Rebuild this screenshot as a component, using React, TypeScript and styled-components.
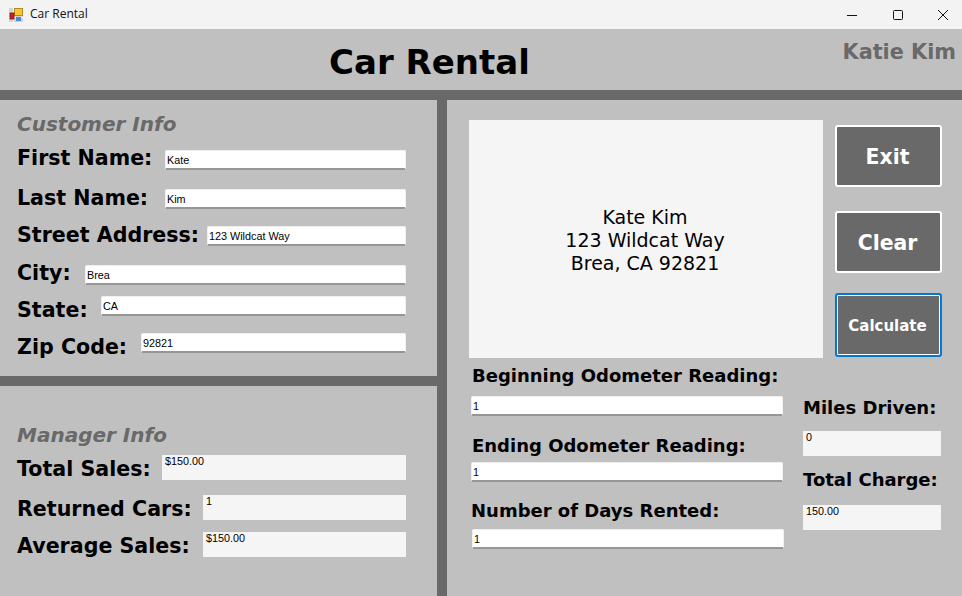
import React from "react";
import styled, { createGlobalStyle } from "styled-components";

const GlobalStyle = createGlobalStyle`
  html, body {
    margin: 0;
    padding: 0;
    background: #c0c0c0;
    overflow: hidden;
  }
  * {
    box-sizing: border-box;
  }
`;

const Window = styled.div`
  width: 962px;
  height: 596px;
  display: flex;
  flex-direction: column;
  background: #c0c0c0;
  font-family: "DejaVu Sans", Verdana, sans-serif;
  color: #000;
`;

const TitleBar = styled.div`
  height: 29px;
  flex: none;
  display: flex;
  align-items: center;
  background: #f3f3f3;
  padding-left: 9px;
`;

const WindowTitle = styled.span`
  margin: 0 0 2px 7px;
  font: 12px "Open Sans", "Noto Sans", sans-serif;
  color: #111;
`;

const WindowButtons = styled.div`
  margin-left: auto;
  display: flex;
  gap: 25.5px;
  padding-right: 9px;
`;

const WindowButton = styled.div`
  width: 20px;
  height: 27px;
  display: flex;
  align-items: center;
  justify-content: center;
`;

const Header = styled.header`
  height: 71px;
  flex: none;
  display: flex;
  border-bottom: 10px solid #696969;
  padding: 10px 6px 0 329px;
  justify-content: space-between;
`;

const Title = styled.h1`
  margin: 0;
  font-size: 34px;
  line-height: 46px;
  font-weight: 700;
`;

const Author = styled.div`
  margin-top: 1px;
  font-size: 20.8px;
  line-height: 24px;
  font-weight: 700;
  color: #696969;
`;

const Body = styled.main`
  flex: 1;
  display: flex;
  min-height: 0;
`;

const LeftColumn = styled.div`
  width: 447px;
  flex: none;
  display: flex;
  flex-direction: column;
  border-right: 10px solid #696969;
`;

const Section = styled.section<{ $height: number; $top: number; $divider?: boolean }>`
  height: ${(p) => p.$height}px;
  padding: ${(p) => p.$top}px 31px 0 17px;
  flex: none;
  border-bottom: ${(p) => (p.$divider ? "10px solid #696969" : "none")};
`;

const SectionTitle = styled.h2<{ $height: number }>`
  margin: 0;
  height: ${(p) => p.$height}px;
  font-size: 20px;
  line-height: 24px;
  font-weight: 700;
  font-style: italic;
  color: #696969;
`;

const Row = styled.div<{ $height: number; $gap: number }>`
  height: ${(p) => p.$height}px;
  margin-bottom: ${(p) => p.$gap}px;
  display: flex;
  align-items: flex-start;
  justify-content: space-between;
`;

const FieldLabel = styled.label<{ $shift: number }>`
  margin-top: ${(p) => p.$shift}px;
  font-size: 20.6px;
  line-height: 24px;
  font-weight: 700;
  white-space: nowrap;
`;

const TextBox = styled.input<{ $width: number; $gap?: number; $left?: number }>`
  display: block;
  width: ${(p) => p.$width}px;
  height: 20px;
  margin: 0 0 ${(p) => p.$gap ?? 0}px ${(p) => p.$left ?? 0}px;
  padding: 1px 1px 0;
  border: 1px solid #f0f0f0;
  border-bottom: 2px solid #969696;
  border-radius: 2px;
  outline: none;
  background: #fff;
  font: 10.8px "Liberation Sans", Arial, sans-serif;
  color: #000;
`;

const OutputBox = styled.div<{ $width: number }>`
  width: ${(p) => p.$width}px;
  height: 25px;
  padding: 0 3px;
  background: #f5f5f5;
  font: 10.8px/12px "Liberation Sans", Arial, sans-serif;
  color: #000;
`;

const RightColumn = styled.div`
  flex: 1;
  display: flex;
  flex-direction: column;
  padding: 20px 20px 0 22px;
`;

const TopRow = styled.div`
  height: 238px;
  flex: none;
  display: flex;
  justify-content: space-between;
`;

const AddressBox = styled.div`
  width: 354px;
  display: flex;
  align-items: center;
  justify-content: center;
  padding: 3px 2px 0 0;
  background: #f5f5f5;
  text-align: center;
  font-size: 19px;
  line-height: 23px;
  white-space: pre-line;
`;

const ButtonColumn = styled.div`
  width: 107px;
  display: flex;
  flex-direction: column;
  padding-top: 5px;
`;

const ActionButton = styled.button<{ $height: number; $gap: number; $small?: boolean; $focused?: boolean }>`
  height: ${(p) => p.$height}px;
  margin: 0 0 ${(p) => p.$gap}px;
  padding: ${(p) => (p.$small ? "2px 2px 0 0" : "2px 2px 0 0")};
  border: 2px solid ${(p) => (p.$focused ? "#0078d7" : "#fff")};
  border-radius: 3px;
  box-shadow: ${(p) => (p.$focused ? "inset 0 0 0 1px #fff" : "none")};
  background: #696969;
  color: #fff;
  font-family: "DejaVu Sans", Verdana, sans-serif;
  font-weight: 700;
  font-size: ${(p) => (p.$small ? 15 : 20.4)}px;
`;

const BottomRow = styled.div`
  flex: 1;
  display: flex;
  justify-content: space-between;
  padding-right: 1px;
`;

const OdometerColumn = styled.div`
  width: 314px;
  padding: 6px 0 0 2px;
`;

const ReadingLabel = styled.div<{ $height: number; $indent?: number }>`
  height: ${(p) => p.$height}px;
  padding-left: ${(p) => p.$indent ?? 1}px;
  font-size: 18px;
  line-height: 24px;
  font-weight: 700;
  white-space: nowrap;
`;

const ResultColumn = styled.div`
  width: 138px;
  padding-top: 38px;
`;

const ResultLabel = styled.div<{ $height: number; $top?: number }>`
  height: ${(p) => p.$height}px;
  margin-top: ${(p) => p.$top ?? 0}px;
  font-size: 18px;
  line-height: 24px;
  font-weight: 700;
  white-space: nowrap;
`;

const AppIcon = () => (
  <svg width="14" height="14" viewBox="0 0 14 14">
    <rect x="0" y="0" width="14" height="14" fill="#d4d4d4" />
    <path d="M4.5 0v14M0 9.5h14" stroke="#f4f4f4" strokeWidth="1" />
    <rect x="5.5" y="0.5" width="8" height="7" fill="#f8c62f" stroke="#b58a1e" strokeWidth="1" />
    <rect x="1" y="5" width="4" height="6" fill="#d0201a" stroke="#7d1410" strokeWidth="0.8" />
    <rect x="7" y="9" width="5" height="4" fill="#4f86d8" />
  </svg>
);

const MinimizeIcon = () => (
  <svg width="12" height="12" viewBox="0 0 12 12">
    <path d="M1 6.5h10" stroke="#111" strokeWidth="1" fill="none" />
  </svg>
);

const MaximizeIcon = () => (
  <svg width="12" height="12" viewBox="0 0 12 12">
    <rect x="1.5" y="1.5" width="9" height="9" rx="1" stroke="#111" strokeWidth="1" fill="none" />
  </svg>
);

const CloseIcon = () => (
  <svg width="12" height="12" viewBox="0 0 12 12">
    <path d="M1 1l10 10M11 1L1 11" stroke="#111" strokeWidth="1" fill="none" />
  </svg>
);

function App() {
  return (
    <Window>
      <GlobalStyle />
      <TitleBar>
        <AppIcon />
        <WindowTitle>Car Rental</WindowTitle>
        <WindowButtons>
          <WindowButton>
            <MinimizeIcon />
          </WindowButton>
          <WindowButton>
            <MaximizeIcon />
          </WindowButton>
          <WindowButton>
            <CloseIcon />
          </WindowButton>
        </WindowButtons>
      </TitleBar>

      <Header>
        <Title>Car Rental</Title>
        <Author>Katie Kim</Author>
      </Header>

      <Body>
        <LeftColumn>
          <Section $height={286} $top={12} $divider>
            <SectionTitle $height={38}>Customer Info</SectionTitle>
            <Row $height={20} $gap={19}>
              <FieldLabel $shift={-4}>First Name:</FieldLabel>
              <TextBox $width={241} readOnly value="Kate" />
            </Row>
            <Row $height={20} $gap={17}>
              <FieldLabel $shift={-3}>Last Name:</FieldLabel>
              <TextBox $width={241} readOnly value="Kim" />
            </Row>
            <Row $height={20} $gap={19}>
              <FieldLabel $shift={-3}>Street Address:</FieldLabel>
              <TextBox $width={199} readOnly value="123 Wildcat Way" />
            </Row>
            <Row $height={20} $gap={11}>
              <FieldLabel $shift={-4}>City:</FieldLabel>
              <TextBox $width={321} readOnly value="Brea" />
            </Row>
            <Row $height={20} $gap={17}>
              <FieldLabel $shift={2}>State:</FieldLabel>
              <TextBox $width={305} readOnly value="CA" />
            </Row>
            <Row $height={20} $gap={0}>
              <FieldLabel $shift={2}>Zip Code:</FieldLabel>
              <TextBox $width={265} readOnly value="92821" />
            </Row>
          </Section>

          <Section $height={210} $top={37}>
            <SectionTitle $height={32}>Manager Info</SectionTitle>
            <Row $height={25} $gap={15}>
              <FieldLabel $shift={2}>Total Sales:</FieldLabel>
              <OutputBox $width={244}>$150.00</OutputBox>
            </Row>
            <Row $height={25} $gap={12}>
              <FieldLabel $shift={2}>Returned Cars:</FieldLabel>
              <OutputBox $width={203}>1</OutputBox>
            </Row>
            <Row $height={25} $gap={0}>
              <FieldLabel $shift={2}>Average Sales:</FieldLabel>
              <OutputBox $width={203}>$150.00</OutputBox>
            </Row>
          </Section>
        </LeftColumn>

        <RightColumn>
          <TopRow>
            <AddressBox>{"Kate Kim\n123 Wildcat Way\nBrea, CA 92821"}</AddressBox>
            <ButtonColumn>
              <ActionButton $height={62} $gap={24}>Exit</ActionButton>
              <ActionButton $height={62} $gap={20}>Clear</ActionButton>
              <ActionButton $height={64} $gap={0} $small $focused>Calculate</ActionButton>
            </ButtonColumn>
          </TopRow>

          <BottomRow>
            <OdometerColumn>
              <ReadingLabel $height={32}>Beginning Odometer Reading:</ReadingLabel>
              <TextBox $width={312} $gap={18} readOnly value="1" />
              <ReadingLabel $height={28}>Ending Odometer Reading:</ReadingLabel>
              <TextBox $width={312} $gap={17} readOnly value="1" />
              <ReadingLabel $height={30} $indent={0}>Number of Days Rented:</ReadingLabel>
              <TextBox $width={312} $left={1} readOnly value="1" />
            </OdometerColumn>
            <ResultColumn>
              <ResultLabel $height={35}>Miles Driven:</ResultLabel>
              <OutputBox $width={138}>0</OutputBox>
              <ResultLabel $top={12} $height={37}>Total Charge:</ResultLabel>
              <OutputBox $width={138}>150.00</OutputBox>
            </ResultColumn>
          </BottomRow>
        </RightColumn>
      </Body>
    </Window>
  );
}

export default App;
